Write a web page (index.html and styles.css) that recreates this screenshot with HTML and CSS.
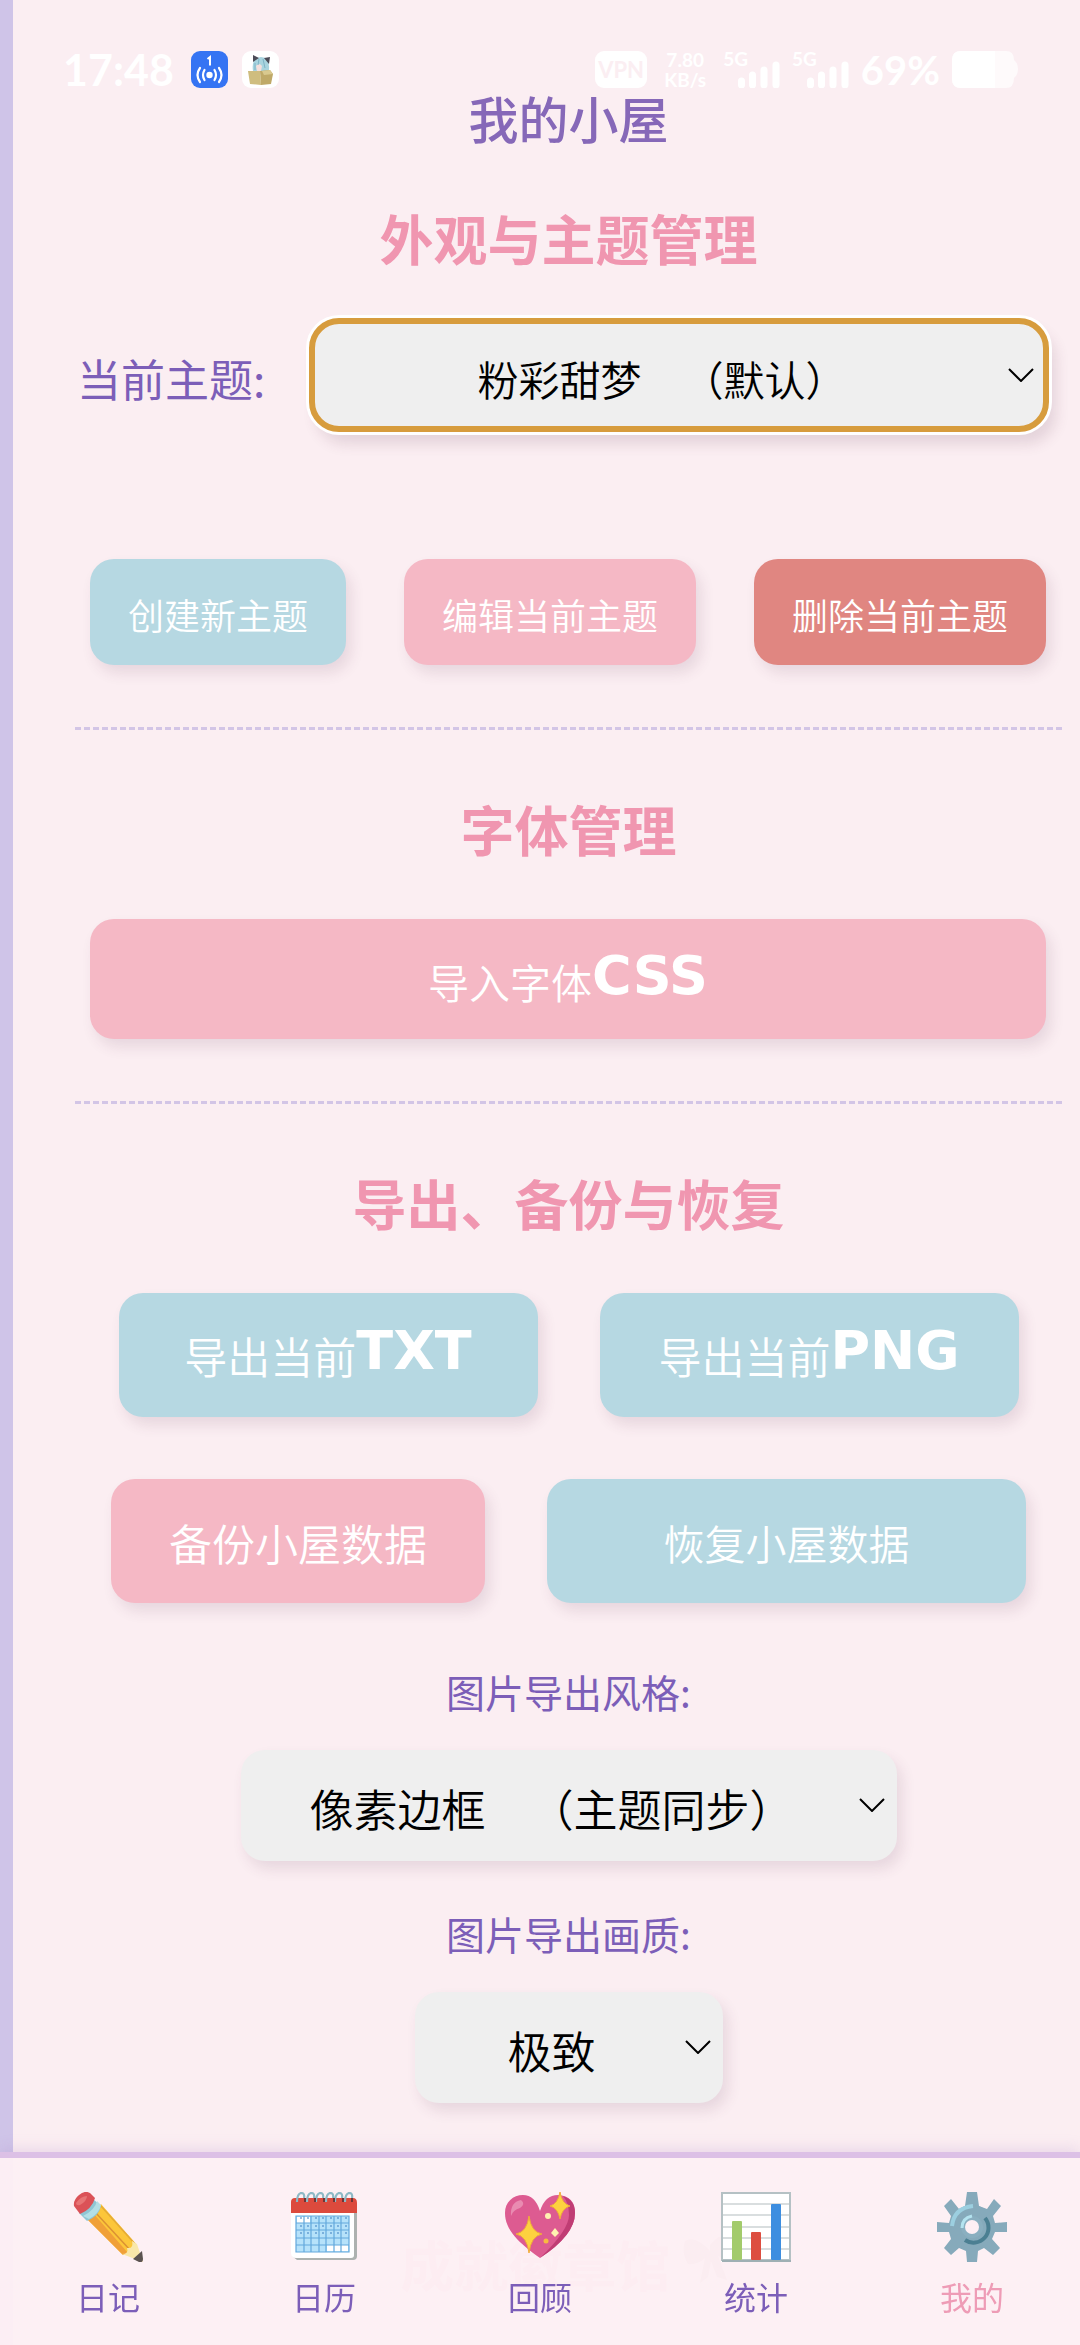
FILE: index.html
```html
<!DOCTYPE html>
<html lang="zh-CN">
<head>
  <meta charset="UTF-8">
  <meta name="viewport" content="width=device-width, initial-scale=1.0">
  <title>我的小屋</title>
  <link rel="stylesheet" href="styles.css">
</head>

<body>
  <main class="page">
    <div class="status-bar">
      <div class="status-group status-left">
        <span class="clock">17:48</span>
        <svg class="app-icon" viewBox="0 0 37 37">
          <rect width="37" height="37" rx="9" fill="#3574f3"/>
          <path d="M16.500 8l2.500-2v8.500" fill="none" stroke="#fff" stroke-width="2"/>
          <circle cx="18.500" cy="24" r="3.200" fill="#fff"/>
          <path d="M13.500 19q-3 5 0 10M9 17q-5 7 0 14M23.500 19q3 5 0 10M28 17q5 7 0 14" fill="none" stroke="#fff" stroke-width="2.200" stroke-linecap="round"/>
        </svg>
        <svg class="app-icon" viewBox="0 0 37 37">
          <rect width="37" height="37" rx="9" fill="#fff"/>
          <path d="M11 20q-2-13 8-14 9 0 8 13l-2 2z" fill="#a9d4df"/>
          <path d="M11 4l6 3-6 4zM28 6l-6 1 5 6z" fill="#4c4b57"/>
          <path d="M14 15q3-4 6 0l-1 5h-4z" fill="#f4dfdd"/>
          <path d="M17 8l-1 6M21 8l2 9M13 12v7" stroke="#7fb4c6" fill="none"/>
          <path d="M6 20h12l1 14-11-1z" fill="#cfbd7f"/>
          <path d="M18 20l10-1 3 4-2 10-10 1z" fill="#bfa968"/>
          <path d="M20 20l8-1 3 4-9 1z" fill="#d9c98f"/>
        </svg>
      </div>
      <div class="status-group">
        <span class="vpn">VPN</span>
        <span class="net-speed">7.80<br>KB/s</span>
        <span class="signal">
          <span class="signal-label">5G</span>
          <svg class="signal-bars" viewBox="0 0 42 27"><path d="M3.500 20v4M14.500 14v10M26 9v15M38 4v20" stroke="#fff" stroke-width="7" stroke-linecap="round"/></svg>
        </span>
        <span class="signal">
          <span class="signal-label">5G</span>
          <svg class="signal-bars" viewBox="0 0 42 27"><path d="M3.500 20v4M14.500 14v10M26 9v15M38 4v20" stroke="#fff" stroke-width="7" stroke-linecap="round"/></svg>
        </span>
        <span class="percent">69%</span>
        <svg class="battery" viewBox="0 0 66 37">
          <path d="M9 0h45q8 0 8 9 4 3 4 9t-4 9q0 10-8 10H9q-9 0-9-9V9q0-9 9-9z" fill="#fff" opacity="0.7"/>
          <path d="M9 0h34v37H9q-9 0-9-9V9q0-9 9-9z" fill="#fff"/>
        </svg>
      </div>
    </div>

    <h1>我的小屋</h1>

    <section class="section">
      <h2>外观与主题管理</h2>
      <div class="theme-row">
        <label for="theme">当前主题:</label>
        <span class="select-box focused">
          <select id="theme" name="theme">
            <option>粉彩甜梦　（默认）</option>
          </select>
          <svg class="chevron" viewBox="0 0 26 14"><path d="M1 1l12 12L25 1"/></svg>
        </span>
      </div>
      <div class="theme-actions">
        <button type="button" class="btn btn-small btn-blue">创建新主题</button>
        <button type="button" class="btn btn-small btn-pink">编辑当前主题</button>
        <button type="button" class="btn btn-small btn-red">删除当前主题</button>
      </div>
    </section>

    <section class="section">
      <h2>字体管理</h2>
      <div class="font-actions">
        <button type="button" class="btn btn-wide btn-pink">导入字体<span class="latin">CSS</span></button>
      </div>
    </section>

    <section class="section">
      <h2>导出、备份与恢复</h2>
      <div class="data-actions">
        <button type="button" class="btn btn-export btn-blue">导出当前<span class="latin">TXT</span></button>
        <button type="button" class="btn btn-export btn-blue">导出当前<span class="latin">PNG</span></button>
      </div>
      <div class="data-actions">
        <button type="button" class="btn btn-pink">备份小屋数据</button>
        <button type="button" class="btn btn-blue btn-grow">恢复小屋数据</button>
      </div>
      <div class="export-options">
        <label for="export-style">图片导出风格:</label>
        <span class="select-box">
          <select id="export-style" name="style">
            <option>像素边框　（主题同步）</option>
          </select>
          <svg class="chevron" viewBox="0 0 26 14"><path d="M1 1l12 12L25 1"/></svg>
        </span>
        <label for="export-quality">图片导出画质:</label>
        <span class="select-box">
          <select id="export-quality" name="quality">
            <option>极致</option>
          </select>
          <svg class="chevron" viewBox="0 0 26 14"><path d="M1 1l12 12L25 1"/></svg>
        </span>
      </div>
    </section>

    <section class="section achievements">
      <h2>成就徽章馆
        <svg class="ribbon" viewBox="0 0 54 50"><path d="M27 14Q12-2 2 4q-4 12 3 23 10 1 17-6l-5 25 8-6 3-16 6 16 10 3-9-24q13 7 17 0 4-14-2-23-11-2-23 12z"/></svg>
      </h2>
    </section>
  </main>

  <nav class="tab-bar">
    <a href="#diary" class="tab">
      <svg class="tab-icon" viewBox="0 0 70 70">
        <path d="M14 27L28 12 64 53 50 63z" fill="#fcc63a"/>
        <path d="M14 27l6-6 35 40-5 2z" fill="#f0a038"/>
        <path d="M22 20l36 39" stroke="#dc9233" stroke-width="1.500"/>
        <path d="M28 14l34 38" stroke="#e5ab35" stroke-width="1.500"/>
        <path d="M49 62q7 0 5-6 7 1 5-7l5 3 6 18z" fill="#f9e7a9"/>
        <path d="M60 67l9-8 1 8q0 4-4 3z" fill="#5b5350"/>
        <path d="M6 21L20 7l8 7q-2 10-14 15z" fill="#8fc6d4"/>
        <path d="M10 24Q22 18 24 9l4 4q-2 9-12 14z" fill="#b3dfe6"/>
        <path d="M1 14Q0 8 6 3q6-5 11-2l5 5Q19 17 7 22z" fill="#db5257"/>
        <path d="M3 11Q8 4 14 4q0 5-7 9-4 1-4-2z" fill="#e77575"/>
      </svg>
      <span>日记</span>
    </a>
    <a href="#calendar" class="tab">
      <svg class="tab-icon" viewBox="0 0 70 70">
        <path d="M6 10h58q4 0 4 4v50q0 4-4 4H8l-5-4z" fill="#adb2b0"/>
        <path d="M2 14h63v49q0 3-3 3H7q-5 0-5-5z" fill="#fff"/>
        <path d="M2 21V10q0-4 4-4h58q4 0 4 5v10z" fill="#dc4a3d"/>
        <path d="M7 24h53v36H7z" fill="#b6e2fa"/>
        <path d="M8 25h13v6H8zM38 53h21v6H38z" fill="#fff"/>
        <path d="M7 24h53v36H7zM7 31h53M7 38h53M7 46h53M7 53h53M15 24v36M22 24v36M30 24v36M37 24v36M45 24v36M52 24v36" fill="none" stroke="#63a8dc" stroke-width="1.200"/>
        <path d="M12 25v2M19 25v2M27 25v2M34 25v2M42 25v2M49 25v2M57 25v2M12 33v2M19 33v2M27 33v2M34 33v2M42 33v2M49 33v2M57 33v2M12 40v2M19 40v2M27 40v2M34 40v2M42 40v2M49 40v2M57 40v2" stroke="#3f7fc0"/>
        <path d="M8 10q0-8 4-9 4 0 3 5M18 10q0-8 4-9 4 0 3 5M27 10q0-8 4-9 4 0 3 5M37 10q0-8 4-9 4 0 3 5M46 10q0-8 4-9 4 0 3 5M56 10q0-8 4-9 4 0 3 5" fill="none" stroke="#8db9c5" stroke-width="2.200"/>
        <path d="M16 10v-4M26 10v-4M35 10v-4M45 10v-4M54 10v-4M63 10v-4" stroke="#6f3535" stroke-width="2"/>
      </svg>
      <span>日历</span>
    </a>
    <a href="#review" class="tab">
      <svg class="tab-icon" viewBox="0 0 70 70">
        <path d="M35 66C14 51 0 38 0 21 0 10 8 3 18 3q12 0 17 16Q40 3 53 3q17 1 17 18 0 22-35 45z" fill="#dd5b91"/>
        <path d="M58 4q12 4 12 17 0 22-35 45 29-28 29-43 0-12-6-19z" fill="#c03d74"/>
        <path d="M6 24q-1-14 10-16 5 4-1 8-7 2-9 8z" fill="#e98bb1"/>
        <path d="M24 24q2 16 13 18-11 2-13 19-2-17-13-19 11-2 13-18zM55 0q2 12 10 14-8 2-10 13-2-11-10-13 8-2 10-14z" fill="#fdd23f" stroke="#f0ab3a" stroke-width="1"/>
        <path d="M50 36l4 5-4 4-4-4z" fill="#fff3b0"/>
        <circle cx="43" cy="24" r="3" fill="#fff0b0"/>
        <circle cx="41" cy="49" r="2.500" fill="#f8b940"/>
      </svg>
      <span>回顾</span>
    </a>
    <a href="#stats" class="tab">
      <svg class="tab-icon" viewBox="0 0 70 70">
        <path d="M0 0h70v70H0z" fill="#fff"/>
        <path d="M1 12h68M1 23h68M1 35h68M1 46h68M1 57h68" stroke="#cdd3d5" stroke-width="1.500"/>
        <path d="M1 1h68v67H1z" fill="none" stroke="#b5c1c4" stroke-width="2"/>
        <path d="M1 69h69" stroke="#9fb0b4" stroke-width="2"/>
        <rect x="11" y="29" width="10" height="39" rx="1" fill="#a3cb6c"/>
        <rect x="30" y="40" width="10" height="28" rx="1" fill="#dd4e40"/>
        <rect x="50" y="12" width="10" height="56" rx="1" fill="#3d8ee0"/>
      </svg>
      <span>统计</span>
    </a>
    <a href="#mine" class="tab active">
      <svg class="tab-icon" viewBox="0 0 70 70">
        <path d="M30 0h10l2 14 8 3 7-10 7 7-8 10 2 7 12-1v10l-12 0-3 7 8 9-7 7-9-7-6 3-1 11H30l-1-11-7-3-8 7-7-7 7-9-2-7-12 0V30l12 1 2-7-7-10 7-7 8 10 6-3z" fill="#86aabb"/>
        <circle cx="35" cy="35" r="22" fill="#86aabb"/>
        <path d="M15 34q2-18 21-20" fill="none" stroke="#9ccfe0" stroke-width="4"/>
        <path d="M48 26a15 15 0 0 1-20 22" fill="none" stroke="#4b7f92" stroke-width="4"/>
        <circle cx="35" cy="35" r="11" fill="#8aafc0"/>
        <path d="M25 36q0-10 10-12" fill="none" stroke="#b4e3ef" stroke-width="3"/>
        <circle cx="35" cy="35" r="7" fill="#fdeff4"/>
      </svg>
      <span>我的</span>
    </a>
  </nav>
</body>
</html>
```
FILE: styles.css
```css
* {
  box-sizing: border-box;
}

body {
  margin: 0;
  background-color: #fbeef2;
  color: #7c5eb8;
  font-family: 'Noto Sans CJK SC', sans-serif;
}

.page {
  min-height: 100vh;
  border-left: 13px solid #cfc4e8;
  padding: 51px 18px 0 62px;
}

/* status bar */
.status-bar {
  display: flex;
  justify-content: space-between;
  height: 37px;
  padding-right: 44px;
  color: white;
  font-family: Lato, sans-serif;
  font-weight: bold;
}

.status-group {
  display: flex;
  align-items: center;
  gap: 12px;
}

.status-left {
  gap: 14px;
}

.clock {
  font-size: 43px;
  margin-left: -12px;
}

.app-icon {
  width: 37px;
  height: 37px;
  flex: none;
}

.clock + .app-icon {
  margin-left: 3px;
}

.vpn {
  background-color: white;
  color: #fbeef2;
  border-radius: 9px;
  width: 52px;
  line-height: 37px;
  font-size: 22px;
  text-align: center;
}

.net-speed {
  font-size: 19px;
  line-height: 20px;
  text-align: center;
  width: 52px;
}

.signal {
  display: flex;
  align-items: flex-start;
  height: 37px;
}

.signal-label {
  font-size: 19px;
  line-height: 16px;
  margin-right: -10px;
}

.signal-bars {
  width: 42px;
  height: 27px;
  align-self: flex-end;
}

.percent {
  font-size: 40px;
}

.battery {
  width: 66px;
  height: 37px;
}

h1 {
  margin: 0;
  text-align: center;
  font-size: 50px;
  line-height: 58px;
  font-weight: 500;
  color: #8668b8;
}

h2 {
  margin: 0 0 51px;
  text-align: center;
  font-size: 54px;
  line-height: 58px;
  font-weight: bold;
  color: #f096b0;
}

.section {
  padding: 70px 0 62px;
  border-bottom: 3px dashed #d3c5e6;
}

h1 + .section {
  padding-top: 63px;
}

.section:nth-last-of-type(-n+2) {
  border-bottom: none;
}

/* buttons */
.btn {
  border: none;
  border-radius: 24px;
  padding: 2px 58px 0;
  height: 124px;
  color: white;
  font-family: inherit;
  font-size: 43px;
  font-weight: 350;
  white-space: nowrap;
  box-shadow: 5px 8px 14px rgba(90, 50, 80, 0.12);
  cursor: pointer;
}

.btn-small {
  height: 106px;
  padding: 4px 38px 0;
  font-size: 36px;
}

.btn-wide {
  width: 100%;
  height: 120px;
  font-size: 41px;
}

.btn-export {
  flex: 0 1 419px;
  padding: 0;
}

.btn-grow {
  flex: 1;
  font-size: 41px;
}

.btn-blue { background-color: #b6d8e2; }
.btn-pink { background-color: #f5b8c5; }
.btn-red { background-color: #e08681; }

.latin {
  font-family: 'DejaVu Sans', sans-serif;
  font-size: 54px;
  font-weight: bold;
  line-height: 53px;
  vertical-align: 5px;
}

.theme-actions {
  display: flex;
  justify-content: space-between;
  padding: 127px 16px 0 15px;
}

.font-actions {
  padding: 10px 16px 0 15px;
}

.data-actions {
  display: flex;
  justify-content: center;
  gap: 62px;
  padding: 10px 36px 52px;
}

/* selects */
.theme-row {
  display: flex;
  align-items: center;
  gap: 44px;
  padding: 0 13px 0 2px;
}

.theme-row label {
  font-size: 44px;
  padding-top: 5px;
}

.select-box {
  position: relative;
  display: inline-flex;
  font-size: 44px;
}

select {
  appearance: none;
  width: 100%;
  min-width: 308px;
  height: 111px;
  padding: 5px 103px 0 69px;
  border: none;
  border-radius: 24px;
  outline: none;
  background-color: #efefef;
  color: black;
  font-family: inherit;
  font-size: inherit;
  font-weight: 350;
  text-spacing-trim: space-all;
  text-align: center;
  text-align-last: center;
  box-shadow: 5px 8px 14px rgba(90, 50, 80, 0.12);
}

.chevron {
  position: absolute;
  right: 12px;
  top: 48px;
  width: 26px;
  height: 14px;
  fill: none;
  stroke: black;
  stroke-width: 2;
  pointer-events: none;
}

.focused {
  flex: 1;
  font-size: 41px;
}

.focused select {
  height: 114px;
  border: 6px solid #d79c3d;
  border-radius: 30px;
  box-shadow: 0 0 0 3px white, 7px 12px 14px rgba(90, 50, 80, 0.14);
}

.focused .chevron {
  right: 15px;
  top: 50px;
}

.export-options {
  display: flex;
  flex-direction: column;
  align-items: center;
  padding-top: 16px;
}

.export-options label {
  font-size: 39px;
  line-height: 40px;
  margin-bottom: 39px;
}

.select-box + label {
  margin-top: 52px;
}

.achievements {
  padding-bottom: 0;
}

.achievements h2 {
  margin-bottom: 0;
}

.ribbon {
  width: 54px;
  height: 50px;
  fill: #b89a94;
}

/* bottom tabs */
.tab-bar {
  position: fixed;
  left: 0;
  right: 0;
  bottom: 0;
  height: 193px;
  display: flex;
  border-top: 6px solid #dcc0e6;
  background-color: rgba(253, 239, 244, 0.97);
  box-shadow: 0 -3px 14px rgba(160, 120, 190, 0.2);
}

.tab {
  flex: 1;
  display: flex;
  flex-direction: column;
  align-items: center;
  gap: 12px;
  padding-top: 34px;
  color: #7c5eb8;
  font-size: 32px;
  line-height: 44px;
  text-decoration: none;
}

.tab-icon {
  width: 70px;
  height: 70px;
}

.tab.active {
  color: #ee9cb6;
}
```
